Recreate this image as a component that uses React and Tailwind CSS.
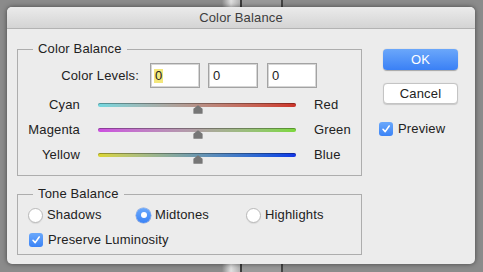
import React from 'react';

const Radio = ({ checked }) =>
  checked ? (
    <span className="w-[15px] h-[15px] rounded-full bg-gradient-to-b from-[#6aa8fb] to-[#3b83f6] flex items-center justify-center shadow-[0_0_0_0.5px_rgba(40,90,200,0.5)]">
      <span className="w-[6px] h-[6px] rounded-full bg-white" />
    </span>
  ) : (
    <span className="w-[15px] h-[15px] rounded-full bg-white border border-[#b9b9b9] shadow-[0_1px_1px_rgba(0,0,0,0.08)]" />
  );

const Check = () => (
  <span className="w-[14px] h-[14px] rounded-[3px] bg-gradient-to-b from-[#6aa8fb] to-[#3b83f6] flex items-center justify-center">
    <svg width="10" height="10" viewBox="0 0 10 10" fill="none">
      <path d="M2 5.3 L4.2 7.6 L8.2 2" stroke="white" strokeWidth="1.6" strokeLinecap="round" strokeLinejoin="round" />
    </svg>
  </span>
);

const Slider = ({ left, right, track }) => (
  <div className="flex items-center h-[25px]">
    <span className="w-[62px] text-right">{left}</span>
    <div className={`ml-[18px] w-[198px] h-[4px] rounded-full relative shadow-[inset_0_1px_0_rgba(0,0,0,0.3)] ${track}`}>
      <svg className="absolute left-[95px] top-[2px]" width="10" height="9" viewBox="0 0 10 9">
        <path d="M5 0.3 L9.6 3.8 L9.6 8.2 Q9.6 8.8 9 8.8 L1 8.8 Q0.4 8.8 0.4 8.2 L0.4 3.8 Z" fill="#767676" />
      </svg>
    </div>
    <span className="ml-[18px]">{right}</span>
  </div>
);

const NumBox = ({ highlight, className }) => (
  <div className={`w-[50px] h-[25px] bg-white border border-[#a3a3a3] shadow-[inset_0_0_0_1px_#d6d6d6] flex items-center pl-[3px] ${className}`}>
    <span className={`px-[1px] leading-[14px] ${highlight ? 'bg-[#f3e77c]' : ''}`}>0</span>
  </div>
);

export default function App() {
  return (
    <div
      className="w-[483px] h-[272px] bg-[#8b8b8b] relative overflow-hidden pt-[7px] pl-[7px] text-[13px] tracking-[0.15px] text-[#222]"
      style={{ fontFamily: '"Liberation Sans", Arial, sans-serif' }}
    >
      {/* desktop behind the window */}
      <div className="absolute left-[222px] top-0 w-[18px] h-full bg-gradient-to-r from-[#8b8b8b] via-[#e0e0e0] to-[#b0b0b0]" />
      <div className="absolute left-[240px] top-0 w-[2px] h-full bg-[#3c3c3c]" />
      <div className="absolute left-[242px] top-0 w-[39px] h-full bg-[#999]" />
      <div className="absolute left-[281px] top-0 w-[2px] h-full bg-[#444]" />

      <div className="relative w-[468px] h-[257px] rounded-[5px] bg-[#ececec] shadow-[0_0_5px_rgba(0,0,0,0.5)] overflow-hidden">
        <div className="h-[22px] bg-gradient-to-b from-[#ebebeb] to-[#d4d4d4] border-b border-[#b3b3b3] flex items-center justify-center text-[#3d3d3d]">
          Color Balance
        </div>

        <div className="flex pl-[10px] pt-[12px]">
          <div className="w-[345px]">
            <fieldset className="border border-[#adadad] h-[135px]">
              <legend className="ml-[15px] px-[5px] leading-[16px]">Color Balance</legend>
              <div className="flex items-center mt-[6px] h-[25px]">
                <span className="w-[121px] text-right">Color Levels:</span>
                <NumBox highlight className="ml-[11px]" />
                <NumBox className="ml-[8px]" />
                <NumBox className="ml-[9px]" />
              </div>
              <div className="mt-[4px]">
                <Slider left="Cyan" right="Red" track="bg-gradient-to-r from-[#72d8e0] to-[#cc3228]" />
                <Slider left="Magenta" right="Green" track="bg-gradient-to-r from-[#cc4ee0] to-[#7cd83a]" />
                <Slider left="Yellow" right="Blue" track="bg-gradient-to-r from-[#dcd62c] to-[#1434e6]" />
              </div>
            </fieldset>

            <fieldset className="border border-[#adadad] h-[69px] mt-[10px]">
              <legend className="ml-[15px] px-[5px] leading-[16px]">Tone Balance</legend>
              <div className="flex items-center mt-[5px] h-[16px] pl-[10px]">
                <div className="w-[108px] flex items-center gap-[4px]">
                  <Radio />
                  <span>Shadows</span>
                </div>
                <div className="w-[110px] flex items-center gap-[4px]">
                  <Radio checked />
                  <span>Midtones</span>
                </div>
                <div className="flex items-center gap-[4px]">
                  <Radio />
                  <span>Highlights</span>
                </div>
              </div>
              <div className="flex items-center gap-[5px] mt-[9px] h-[15px] pl-[11px]">
                <Check />
                <span>Preserve Luminosity</span>
              </div>
            </fieldset>
          </div>

          <div className="ml-[21px] flex flex-col">
            <button className="mt-[8px] w-[75px] h-[21px] rounded-[4px] bg-gradient-to-b from-[#6ba7fa] to-[#3a80f5] text-white shadow-[0_0.5px_1px_rgba(0,0,0,0.3)]">
              OK
            </button>
            <button className="mt-[13px] w-[75px] h-[21px] rounded-[4px] bg-white border border-[#c4c4c4] shadow-[0_0.5px_1px_rgba(0,0,0,0.15)]">
              Cancel
            </button>
            <div className="mt-[18px] -ml-[4px] flex items-center gap-[5px] h-[14px]">
              <Check />
              <span>Preview</span>
            </div>
          </div>
        </div>
      </div>
    </div>
  );
}
